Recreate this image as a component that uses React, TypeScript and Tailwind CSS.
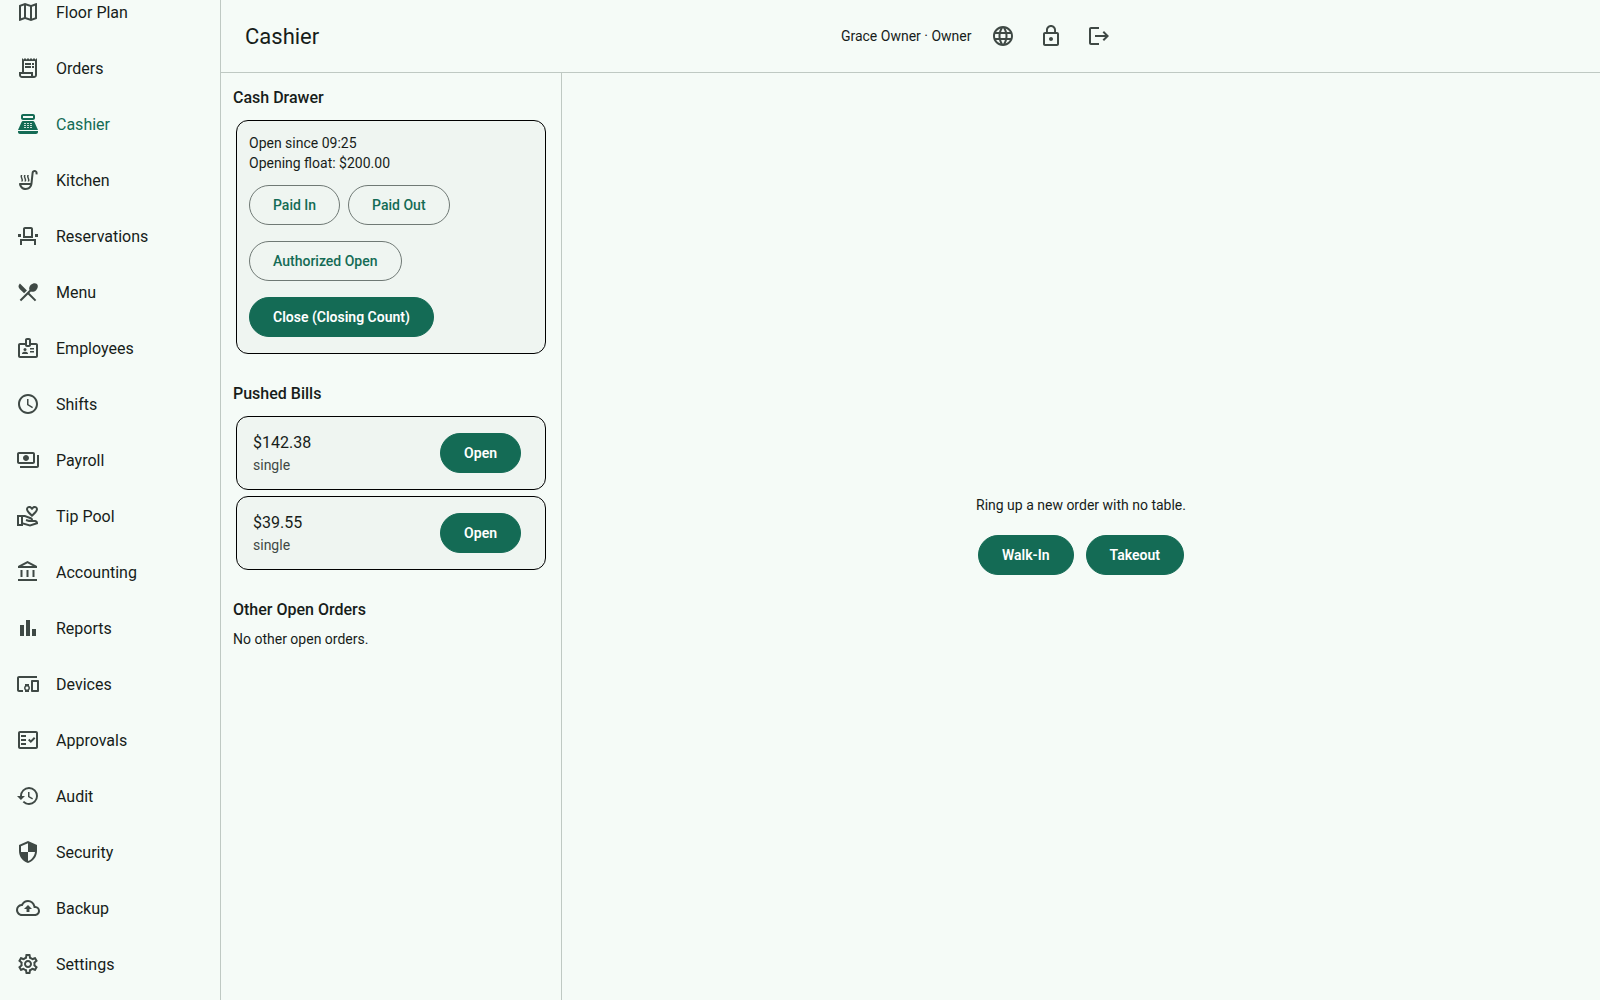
import { useState } from "react";
import type { ReactNode } from "react";
import type { IconType } from "react-icons";
import {
  MdBarChart,
  MdHistory,
  MdLanguage,
  MdLockOutline,
  MdLogout,
  MdOutlineAccountBalance,
  MdOutlineBackup,
  MdOutlineBadge,
  MdOutlineDevicesOther,
  MdOutlineEventSeat,
  MdOutlineFactCheck,
  MdOutlineMap,
  MdOutlinePayments,
  MdOutlineReceiptLong,
  MdOutlineSettings,
  MdOutlineSoupKitchen,
  MdOutlineVolunteerActivism,
  MdPointOfSale,
  MdRestaurantMenu,
  MdSchedule,
  MdSecurity,
} from "react-icons/md";

const NAV_ITEMS: { label: string; icon: IconType }[] = [
  { label: "Floor Plan", icon: MdOutlineMap },
  { label: "Orders", icon: MdOutlineReceiptLong },
  { label: "Cashier", icon: MdPointOfSale },
  { label: "Kitchen", icon: MdOutlineSoupKitchen },
  { label: "Reservations", icon: MdOutlineEventSeat },
  { label: "Menu", icon: MdRestaurantMenu },
  { label: "Employees", icon: MdOutlineBadge },
  { label: "Shifts", icon: MdSchedule },
  { label: "Payroll", icon: MdOutlinePayments },
  { label: "Tip Pool", icon: MdOutlineVolunteerActivism },
  { label: "Accounting", icon: MdOutlineAccountBalance },
  { label: "Reports", icon: MdBarChart },
  { label: "Devices", icon: MdOutlineDevicesOther },
  { label: "Approvals", icon: MdOutlineFactCheck },
  { label: "Audit", icon: MdHistory },
  { label: "Security", icon: MdSecurity },
  { label: "Backup", icon: MdOutlineBackup },
  { label: "Settings", icon: MdOutlineSettings },
];

const HEADER_ACTIONS: { label: string; icon: IconType }[] = [
  { label: "Language", icon: MdLanguage },
  { label: "Lock", icon: MdLockOutline },
  { label: "Log out", icon: MdLogout },
];

const PUSHED_BILLS = [
  { id: "bill-1", total: "$142.38", kind: "single" },
  { id: "bill-2", total: "$39.55", kind: "single" },
];

interface ButtonProps {
  children: ReactNode;
  variant?: "filled" | "outlined";
}

function Button({ children, variant = "filled" }: ButtonProps) {
  return (
    <button
      type="button"
      className={`h-10 shrink-0 cursor-pointer rounded-full border px-[23px] text-sm leading-5 whitespace-nowrap ${
        variant === "filled"
          ? "border-[#146b55] bg-[#146b55] font-semibold text-white"
          : "border-[#6f7975] font-medium text-[#146b55]"
      }`}
    >
      {children}
    </button>
  );
}

function Card({ children, className = "" }: { children: ReactNode; className?: string }) {
  return <div className={`mx-[3px] rounded-xl border border-black bg-[#eff5f1] ${className}`}>{children}</div>;
}

function SectionTitle({ children }: { children: ReactNode }) {
  return <h2 className="text-base leading-[26px] font-medium">{children}</h2>;
}

function Sidebar() {
  const [active, setActive] = useState("Cashier");

  // the list is taller than the window and sits scrolled to its end
  return (
    <nav className="flex w-[221px] shrink-0 flex-col justify-end overflow-hidden border-r border-[#bfc9c3] pb-2">
      {NAV_ITEMS.map(({ label, icon: Icon }) => {
        const isActive = label === active;
        return (
          <a
            key={label}
            href="#"
            aria-current={isActive ? "page" : undefined}
            onClick={() => setActive(label)}
            className={`flex h-14 shrink-0 items-center gap-4 px-4 text-base leading-6 ${
              isActive ? "text-[#146b55]" : "text-[#171d1a]"
            }`}
          >
            <Icon className={`size-6 ${isActive ? "text-[#146b55]" : "text-[#3f4945]"}`} aria-hidden="true" />
            <span className="pt-0.5">{label}</span>
          </a>
        );
      })}
    </nav>
  );
}

function Header() {
  return (
    <header className="flex h-[73px] shrink-0 items-center border-b border-[#bfc9c3] px-6">
      <h1 className="flex-1 pt-0.5 text-[22px] leading-7">Cashier</h1>
      <div className="flex items-center gap-2">
        <span className="text-sm leading-5">Grace Owner · Owner</span>
        <div className="flex">
          {HEADER_ACTIONS.map(({ label, icon: Icon }) => (
            <button
              key={label}
              type="button"
              aria-label={label}
              className="flex size-12 cursor-pointer items-center justify-center rounded-full text-[#3f4945]"
            >
              <Icon className="size-6" aria-hidden="true" />
            </button>
          ))}
        </div>
      </div>
      <div className="w-[34%]" />
    </header>
  );
}

function DrawerPanel() {
  return (
    <aside className="flex w-[341px] shrink-0 flex-col gap-[27px] overflow-hidden border-r border-[#bfc9c3] p-3">
      <section className="flex flex-col gap-[9px]">
        <SectionTitle>Cash Drawer</SectionTitle>
        <Card className="px-3 pt-3 pb-4">
          <div className="text-sm leading-5">
            <p>Open since 09:25</p>
            <p>Opening float: $200.00</p>
          </div>
          <div className="mt-3 flex flex-wrap gap-x-2 gap-y-4">
            <Button variant="outlined">Paid In</Button>
            <Button variant="outlined">Paid Out</Button>
            <Button variant="outlined">Authorized Open</Button>
            <Button>Close (Closing Count)</Button>
          </div>
        </Card>
      </section>

      <section className="flex flex-col gap-[9px]">
        <SectionTitle>Pushed Bills</SectionTitle>
        <ul className="flex flex-col gap-1.5">
          {PUSHED_BILLS.map((bill) => (
            <li key={bill.id}>
              <Card className="flex items-center justify-between py-3.5 pr-6 pl-4">
                <div>
                  <p className="text-base leading-6">{bill.total}</p>
                  <p className="text-sm leading-5 text-[#3f4945]">{bill.kind}</p>
                </div>
                <Button>Open</Button>
              </Card>
            </li>
          ))}
        </ul>
      </section>

      <section className="flex flex-col gap-1.5">
        <SectionTitle>Other Open Orders</SectionTitle>
        <p className="text-sm leading-5">No other open orders.</p>
      </section>
    </aside>
  );
}

export default function App() {
  return (
    <div className="flex h-screen bg-[#f5fbf7] font-['Roboto',sans-serif] text-[#171d1a]">
      <Sidebar />
      <div className="flex min-w-0 flex-1 flex-col">
        <Header />
        <div className="flex min-h-0 flex-1">
          <DrawerPanel />
          <main className="flex flex-1 flex-col items-center justify-center gap-4">
            <p className="text-sm leading-5">Ring up a new order with no table.</p>
            <div className="flex gap-3 py-1">
              <Button>Walk-In</Button>
              <Button>Takeout</Button>
            </div>
          </main>
        </div>
      </div>
    </div>
  );
}
